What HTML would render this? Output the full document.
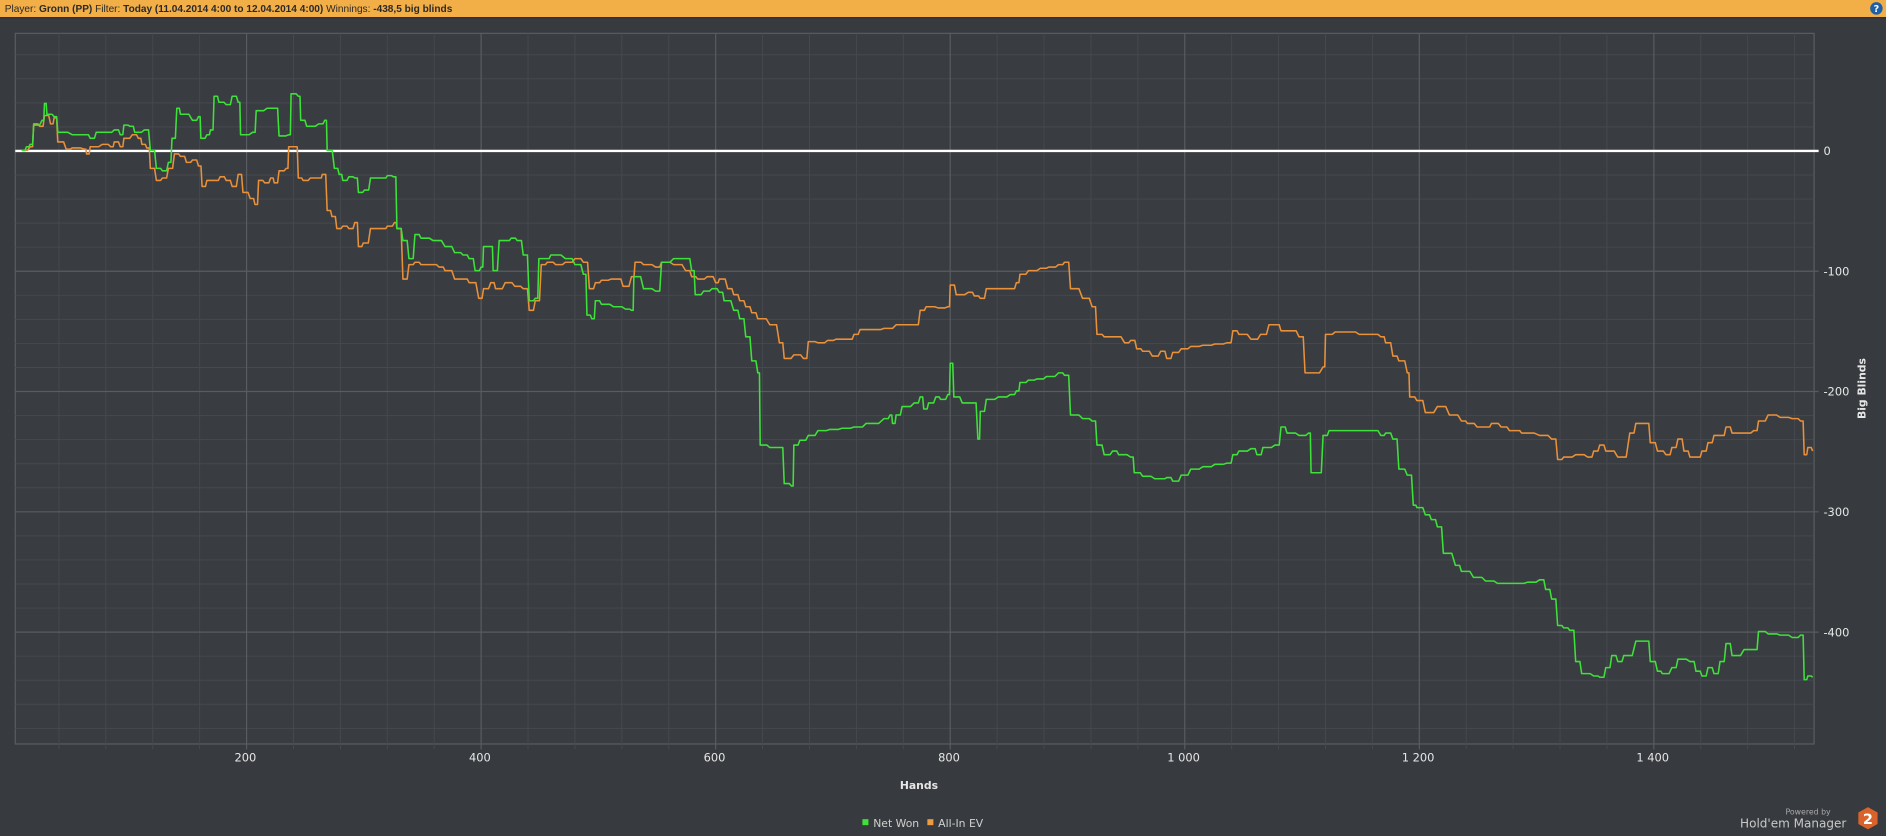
<!DOCTYPE html>
<html><head><meta charset="utf-8"><style>
html,body{margin:0;padding:0;background:#373a3e;width:1886px;height:836px;overflow:hidden}
svg{display:block}
text{font-family:"DejaVu Sans","Liberation Sans",sans-serif}
text.top{font-family:"Liberation Sans",sans-serif}
</style></head><body>
<svg width="1886" height="836" viewBox="0 0 1568 695" preserveAspectRatio="none">
<rect x="0" y="0" width="1568" height="695" fill="#373a3e"/>
<rect x="0" y="0" width="1568" height="14.2" fill="#f2ae47"/>
<rect x="0" y="14.2" width="1568" height="1" fill="#2c2e31"/>
<text class="top" x="4" y="10" font-size="8.4" fill="#2a2a2a">Player: <tspan font-weight="bold">Gronn (PP)</tspan>  Filter: <tspan font-weight="bold">Today (11.04.2014 4:00 to 12.04.2014 4:00)</tspan>  Winnings: <tspan font-weight="bold">-438,5 big blinds</tspan></text>
<circle cx="1560" cy="7" r="5.2" fill="#1f5fa8"/>
<text x="1560" y="10" font-size="8" fill="#fff" text-anchor="middle" font-weight="bold">?</text>
<rect x="12.7" y="27.7" width="1495.5" height="590.8" fill="#393c40" stroke="#5a5d61" stroke-width="1"/>
<g stroke="#464950" stroke-width="0.8">
<path d="M12.7 45.5H1508M12.7 65.5H1508M12.7 85.5H1508M12.7 105.5H1508M12.7 145.5H1508M12.7 165.5H1508M12.7 185.5H1508M12.7 205.5H1508M12.7 245.5H1508M12.7 265.5H1508M12.7 285.5H1508M12.7 305.5H1508M12.7 345.5H1508M12.7 365.5H1508M12.7 385.5H1508M12.7 405.5H1508M12.7 445.5H1508M12.7 465.5H1508M12.7 485.5H1508M12.7 505.5H1508M12.7 545.5H1508M12.7 565.5H1508M12.7 585.5H1508M12.7 605.5H1508"/>
<path d="M49 27.7V623M88 27.7V623M127 27.7V623M166 27.7V623M244 27.7V623M283 27.7V623M322 27.7V623M361 27.7V623M439 27.7V623M478 27.7V623M517 27.7V623M556 27.7V623M634 27.7V623M673 27.7V623M712 27.7V623M751 27.7V623M829 27.7V623M868 27.7V623M907 27.7V623M946 27.7V623M1024 27.7V623M1063 27.7V623M1102 27.7V623M1141 27.7V623M1219 27.7V623M1258 27.7V623M1297 27.7V623M1336 27.7V623M1414 27.7V623M1453 27.7V623M1492 27.7V623"/>
</g>
<g stroke="#595c60" stroke-width="1">
<path d="M12.7 225.5H1512M12.7 325.5H1512M12.7 425.5H1512M12.7 525.5H1512"/>
<path d="M205 27.7V623M400 27.7V623M595 27.7V623M790 27.7V623M985 27.7V623M1180 27.7V623M1375 27.7V623"/>
</g>
<path d="M12.7 125.5H1512" stroke="#ffffff" stroke-width="2"/>
<polyline class="step" fill="none" stroke="#e8903a" stroke-width="1.3" stroke-linejoin="round" points="18,125 25,122 28,103 33,105 37,96 42,103 45,98 48,118 55,124 60,123 70,124 72,128 75,122 85,120 92,122 95,118 100,122 103,115 110,112 115,115 118,120 122,123 125,140 130,150 135,148 140,140 145,128 150,130 155,135 160,133 165,138 168,155 172,150 178,150 183,147 188,150 193,155 198,145 202,160 208,165 212,170 215,150 220,152 225,148 228,152 232,142 238,140 240,122 245,122 248,148 252,150 258,148 265,148 268,145 272,175 276,180 280,190 285,188 290,190 295,185 298,205 302,202 308,190 318,190 322,188 328,185 330,190 335,232 340,220 345,218 350,220 358,220 365,222 370,225 378,232 385,232 390,235 398,248 402,240 408,235 412,240 420,235 428,238 435,240 440,258 445,250 450,220 455,218 462,220 470,218 478,215 485,218 490,240 495,235 500,233 508,232 512,232 518,238 525,230 528,218 535,220 545,222 550,218 560,220 570,225 575,230 580,232 588,230 595,235 598,232 605,240 610,245 615,250 620,255 625,260 630,265 640,270 648,285 652,298 660,295 668,298 672,284 680,285 688,283 695,282 705,282 710,278 715,274 725,274 735,273 745,270 755,270 760,270 765,258 770,255 780,256 788,255 790,237 795,245 805,243 810,246 815,248 820,240 830,240 840,240 845,235 848,228 855,225 865,223 872,222 880,220 885,218 890,240 900,248 908,255 912,278 918,280 925,280 935,285 940,283 945,290 950,292 958,296 965,292 970,298 975,293 982,290 990,288 1000,287 1010,286 1020,285 1025,275 1030,278 1040,282 1048,278 1055,270 1060,270 1065,275 1072,275 1080,280 1085,310 1090,310 1100,305 1102,278 1110,276 1120,276 1130,278 1140,278 1148,280 1152,285 1158,296 1163,300 1170,310 1172,330 1178,333 1185,343 1195,338 1205,345 1215,350 1220,352 1228,355 1235,355 1240,352 1248,355 1255,358 1260,358 1265,360 1280,362 1290,365 1295,382 1300,380 1310,378 1320,380 1325,375 1330,370 1335,375 1345,380 1355,360 1360,352 1368,352 1372,368 1378,375 1385,378 1390,372 1395,365 1400,375 1405,380 1410,380 1415,375 1420,368 1425,362 1430,362 1435,355 1440,360 1450,360 1458,358 1462,350 1470,345 1480,347 1490,348 1497,350 1500,378 1503,372 1507,375"/>
<polyline class="step" fill="none" stroke="#3ee13a" stroke-width="1.3" stroke-linejoin="round" points="18,125 22,122 25,120 28,104 35,100 37,86 39,95 45,97 48,110 60,112 70,112 75,115 80,110 88,110 95,108 100,112 103,104 108,105 112,110 120,108 125,125 130,140 135,142 140,135 143,115 147,90 150,95 160,100 165,97 167,115 172,112 175,108 178,80 182,85 188,87 193,80 198,85 200,112 210,110 213,92 222,90 228,90 232,113 240,112 242,78 248,80 250,100 255,105 265,103 270,100 272,125 278,140 282,145 285,150 290,147 295,148 298,160 303,158 308,148 318,148 322,146 327,147 330,190 335,200 340,215 345,195 350,198 360,200 370,205 378,210 385,212 390,215 395,225 400,222 402,205 408,205 410,225 415,200 420,200 425,198 430,200 435,212 440,250 445,248 448,215 453,215 458,212 470,215 478,220 485,228 488,262 492,265 495,250 500,253 510,255 520,257 525,258 527,230 535,240 545,242 550,218 560,215 570,215 575,225 578,245 585,242 592,240 598,243 602,250 610,258 615,265 620,280 625,300 630,310 632,370 640,372 648,372 652,402 658,404 660,370 665,366 672,362 680,358 690,357 700,356 710,355 720,352 735,348 740,345 742,352 745,345 750,338 760,335 765,330 768,340 772,335 778,330 782,332 788,328 790,302 793,330 800,335 808,335 813,365 815,342 820,332 830,330 840,328 845,325 848,318 855,316 862,315 870,313 880,310 885,312 890,345 900,348 908,350 912,370 918,378 925,375 930,378 940,380 943,393 950,396 960,398 965,398 970,397 975,400 982,395 990,390 1000,388 1010,386 1020,385 1025,378 1030,375 1040,373 1045,378 1050,372 1060,370 1065,355 1070,360 1080,362 1088,360 1090,393 1095,393 1100,362 1105,358 1115,358 1125,358 1140,358 1148,362 1152,360 1158,365 1163,390 1170,395 1175,420 1178,422 1185,428 1190,432 1195,438 1200,460 1210,470 1215,475 1225,480 1235,483 1245,485 1260,485 1270,484 1280,482 1285,490 1290,498 1295,520 1300,522 1305,524 1310,550 1315,560 1325,562 1330,563 1335,555 1340,545 1345,550 1350,545 1360,533 1368,533 1372,550 1378,558 1382,560 1390,555 1395,548 1405,550 1410,558 1415,562 1420,555 1425,560 1430,550 1435,535 1440,545 1450,540 1458,540 1462,525 1470,527 1480,528 1490,530 1497,528 1500,565 1503,562 1507,563"/>
<g fill="#e6e6e6" font-size="9.5">
<text x="1516" y="129">0</text>
<text x="1516" y="229">-100</text>
<text x="1516" y="329">-200</text>
<text x="1516" y="429">-300</text>
<text x="1516" y="529">-400</text>
</g>
<g fill="#e6e6e6" font-size="9.5" text-anchor="middle">
<text x="204" y="633">200</text>
<text x="399" y="633">400</text>
<text x="594" y="633">600</text>
<text x="789" y="633">800</text>
<text x="984" y="633">1 000</text>
<text x="1179" y="633">1 200</text>
<text x="1374" y="633">1 400</text>
<text x="764" y="656" font-weight="bold" font-size="9">Hands</text>
</g>
<text transform="translate(1551,323) rotate(-90)" fill="#e6e6e6" font-size="9" font-weight="bold" text-anchor="middle">Big Blinds</text>
<rect x="717" y="681" width="5" height="5" fill="#3ee13a"/>
<text x="726" y="687.5" fill="#d0d0d0" font-size="9">Net Won</text>
<rect x="771" y="681" width="5" height="5" fill="#ee9a3e"/>
<text x="780" y="687.5" fill="#d0d0d0" font-size="9">All-In EV</text>
<text x="1522" y="677" fill="#aaaaaa" font-size="6.5" text-anchor="end">Powered by</text>
<text x="1535" y="688" fill="#c8c8c8" font-size="10" text-anchor="end">Hold'em Manager</text>
<polygon points="1553,671 1561,675.5 1561,685 1553,689.5 1545,685 1545,675.5" fill="#d9632a"/>
<text x="1553" y="685" fill="#fff" font-size="12" font-weight="bold" text-anchor="middle">2</text>
</svg>
<script>
document.querySelectorAll('polyline.step').forEach(function(pl){
  var pts=pl.getAttribute('points').trim().split(/\s+/).map(function(p){return p.split(',').map(Number);});
  var out=[pts[0]];
  for(var i=1;i<pts.length;i++){
    var a=pts[i-1],b=pts[i];
    var mx=a[0]+(b[0]-a[0])*0.7;
    out.push([mx,a[1]]);out.push([b[0],b[1]]);
  }
  pl.setAttribute('points',out.map(function(p){return p[0]+','+p[1];}).join(' '));
});
</script>
</body></html>
